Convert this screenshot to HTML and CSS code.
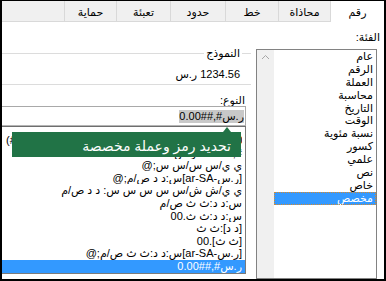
FILE: index.html
```html
<!DOCTYPE html>
<html lang="ar" dir="rtl">
<head>
<meta charset="utf-8">
<link rel="stylesheet" href="styles.css">
</head>
<body>
<div class="dialog">
  <div class="tabs">
    <div class="tab active t54">رقم</div>
    <div class="tab t52">محاذاة</div>
    <div class="tab t53">خط</div>
    <div class="tab t55">حدود</div>
    <div class="tab t54">تعبئة</div>
    <div class="tab t52">حماية</div>
    <div class="tab-fill"></div>
  </div>
  <div class="body">
    <div class="cat">
      <div class="cat-label">الفئة:</div>
      <div class="cat-list">
        <div class="cat-items">
          <div class="cat-item">عام</div>
          <div class="cat-item">الرقم</div>
          <div class="cat-item">العملة</div>
          <div class="cat-item">محاسبة</div>
          <div class="cat-item">التاريخ</div>
          <div class="cat-item">الوقت</div>
          <div class="cat-item">نسبة مئوية</div>
          <div class="cat-item">كسور</div>
          <div class="cat-item">علمي</div>
          <div class="cat-item">نص</div>
          <div class="cat-item">خاص</div>
          <div class="cat-item selected">مخصص</div>
        </div>
        <div class="scrollbar">
          <svg class="chev" width="17" height="14" viewBox="0 0 17 14"><polyline points="5,9 8.5,5.5 12,9" fill="none" stroke="#a6a6a6" stroke-width="1"/></svg>
        </div>
      </div>
    </div>
    <div class="main">
      <div class="group-head">
        <div class="gline seg"></div>
        <div class="group-title">النموذج</div>
        <div class="gline grow"></div>
      </div>
      <div class="sample">1234.56 ر.س</div>
      <div class="gline bottom"></div>
      <div class="type-label">النوع:</div>
      <div class="type-input"><span class="sel">ر.س#,##0.00</span></div>
      <div class="type-list">
        <div class="rows">
          <div class="row">&nbsp;</div>
          <div class="row"><span class="clip" dir="ltr">(#,##0.00 ر.س);[أحمر](#,##0.00 ر.س);(#,##0.00 ر.س)</span></div>
          <div class="row">#,##0.00 ر.س.</div>
          <div class="row">ي ي/س س/س س;@</div>
          <div class="row">[ر.س-ar-SA]س:د د ص/م;@</div>
          <div class="row">ي ي/ش ش/س س س س س: د د ص/م</div>
          <div class="row">س:د د:ث ث ص/م</div>
          <div class="row">س:د د:ث ث.00</div>
          <div class="row">[د د]:ث ث</div>
          <div class="row">[ث ث].00</div>
          <div class="row">[ر.س-ar-SA]س:د د:ث ث ص/م;@</div>
          <div class="row selected">ر.س#,##0.00</div>
        </div>
        <div class="tooltip">
          <span class="tip-arrow"></span>
          <span class="tip-text">تحديد رمز وعملة مخصصة</span>
        </div>
      </div>
    </div>
  </div>
</div>
</body>
</html>
```
FILE: styles.css
```css
* { box-sizing: border-box; }
html, body { margin: 0; padding: 0; }
body {
  width: 386px;
  height: 281px;
  overflow: hidden;
  background: #fff;
  font-family: "Liberation Sans", "DejaVu Sans", sans-serif;
  font-size: 11px;
  color: #000;
}
.dialog {
  width: 386px;
  height: 281px;
  border-style: solid;
  border-color: #000;
  border-width: 1px 2px 2px 2px;
  display: flex;
  flex-direction: column;
  overflow: hidden;
}
.tabs {
  flex: none;
  display: flex;
  height: 21px;
  background: #f0f0f0;
  border-bottom: 1px solid #d9d9d9;
}
.tab {
  flex: none;
  height: 20px;
  border-left: 1px solid #d9d9d9;
  display: flex;
  align-items: center;
  justify-content: center;
  padding-top: 2px;
  white-space: nowrap;
}
.tab.active {
  background: #fff;
  height: 21px;
  margin-bottom: -1px;
}
.t52 { width: 52px; }
.t53 { width: 53px; }
.t54 { width: 54px; }
.t55 { width: 55px; }
.tab-fill { flex: 1; }

.body {
  flex: 1;
  display: flex;
  min-height: 0;
}
.cat {
  flex: none;
  width: 128px;
  display: flex;
  flex-direction: column;
  padding-top: 9px;
}
.cat-label {
  line-height: 13px;
  height: 13px;
  padding-right: 4px;
}
.cat-list {
  flex: 1;
  margin-top: 5px;
  margin-right: 7px;
  border: 1px solid #828282;
  display: flex;
}
.cat-items {
  flex: 1;
}
.cat-item {
  height: 12.9px;
  line-height: 12.9px;
  padding-right: 3px;
  white-space: nowrap;
}
.cat-item.selected {
  background: #3399ff;
  color: #fff;
  outline: 1px dotted #d88a2c;
  outline-offset: -1px;
}
.scrollbar {
  flex: none;
  width: 17px;
  background: #f0f0f0;
}
.chev { display: block; }

.main {
  flex: 1;
  display: flex;
  flex-direction: column;
  min-width: 0;
}
.group-head {
  margin-top: 25px;
  height: 13px;
  display: flex;
  align-items: center;
  margin-right: 5px;
}
.gline {
  height: 1px;
  background: #dcdcdc;
}
.gline.seg { width: 9px; flex: none; }
.gline.grow { flex: 1; }
.group-title {
  padding: 0 2px;
  line-height: 13px;
  white-space: nowrap;
}
.sample {
  margin-top: 8px;
  height: 13px;
  line-height: 13px;
  padding-right: 16px;
  white-space: nowrap;
}
.gline.bottom {
  margin-top: 3px;
  margin-right: 5px;
  flex: none;
}
.type-label {
  margin-top: 9px;
  height: 12px;
  line-height: 12px;
  padding-right: 11px;
}
.type-input {
  flex: none;
  height: 20px;
  margin-right: 10px;
  border: 1px solid #a9a9a9;
  border-left: none;
  border-bottom-color: #b5b5b5;
  display: flex;
  align-items: center;
  padding-right: 1px;
}
.sel {
  background: #c8c8c8;
  line-height: 13px;
  white-space: nowrap;
}
.type-list {
  flex: none;
  position: relative;
  height: 148px;
  margin-right: 10px;
  border: 1px solid #7a7a7a;
  border-left: none;
  border-top-color: #6e6e6e;
  overflow: hidden;
}
.rows {
  margin-top: -5.6px;
}
.row {
  height: 12.6px;
  line-height: 12.6px;
  padding-right: 3px;
  white-space: nowrap;
  overflow: hidden;
}
.row.selected {
  background: #3399ff;
  color: #fff;
}
.clip {
  display: block;
  margin-left: 4px;
  overflow: hidden;
  text-align: left;
  white-space: nowrap;
}
.tooltip {
  position: absolute;
  left: 10px;
  top: 5px;
  width: 229px;
  height: 25px;
  background: #217346;
  color: #fff;
  display: flex;
  align-items: center;
  padding-right: 10px;
  padding-top: 2px;
}
.tip-text {
  font-size: 14px;
  white-space: nowrap;
  line-height: 16px;
}
.tip-arrow {
  position: absolute;
  bottom: 100%;
  right: 10px;
  width: 0;
  height: 0;
  border-left: 4px solid transparent;
  border-right: 4px solid transparent;
  border-bottom: 5px solid #217346;
}
```
